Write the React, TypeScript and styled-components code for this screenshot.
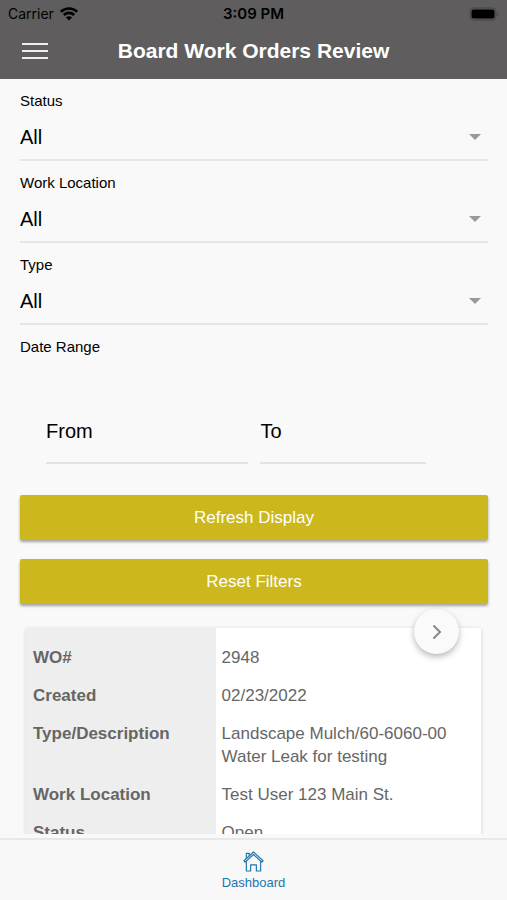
import React from "react";
import styled, { createGlobalStyle } from "styled-components";

const GlobalStyle = createGlobalStyle`
  * { box-sizing: border-box; }
  body {
    margin: 0;
    background: #f9f9f9;
    font-family: "Liberation Sans", Arial, sans-serif;
    color: #000;
  }
`;

const Screen = styled.div`
  display: flex;
  flex-direction: column;
  height: 100vh;
`;

const Header = styled.header`
  flex: none;
  background: #5f5d5e;
`;

const StatusBar = styled.div`
  display: grid;
  grid-template-columns: 1fr auto 1fr;
  align-items: center;
  height: 28px;
  padding: 0 8px;
  font-family: Inter, sans-serif;
  font-size: 14px;
  line-height: 20px;
`;

const Carrier = styled.span`
  display: flex;
  align-items: center;
  gap: 6px;
`;

const Clock = styled.span`
  font-size: 15px;
  font-weight: 600;
`;

const Battery = styled.svg`
  justify-self: end;
`;

const TitleBar = styled.div`
  display: grid;
  grid-template-columns: 48px 1fr 48px;
  align-items: center;
  height: 51px;
  padding: 0 11px 5px;
`;

const MenuButton = styled.button`
  display: flex;
  justify-content: center;
  padding: 8px 0;
  border: 0;
  background: none;
`;

const Title = styled.h1`
  margin: 0;
  color: #fff;
  font-size: 21px;
  line-height: 24px;
  text-align: center;
`;

const Main = styled.main`
  flex: 1;
  min-height: 0;
  overflow-y: auto;
  scrollbar-width: none;
  padding: 0 19px 0 20px;
`;

const Field = styled.div`
  display: flex;
  flex-direction: column;
  height: 82px;
  padding-top: 12px;
  border-bottom: 2px solid #e6e6e6;
`;

const FieldLabel = styled.label`
  font-size: 15px;
  line-height: 20px;
`;

const SelectBox = styled.div`
  display: flex;
  align-items: center;
  padding: 12px 7px 0 0;
`;

const Select = styled.select`
  flex: 1;
  appearance: none;
  padding: 0;
  border: 0;
  background: none;
  color: #000;
  font: 20px/28px "Liberation Sans", Arial, sans-serif;
`;

const DateGroup = styled.fieldset`
  min-width: 0;
  margin: 0;
  padding: 0;
  border: 0;
`;

const DateLegend = styled.legend`
  padding: 12px 0 0;
  font-size: 15px;
  line-height: 20px;
`;

const DateRow = styled.div`
  display: grid;
  grid-template-columns: 11fr 9fr;
  gap: 12px;
  padding: 43px 62px 0 26px;
`;

const DateField = styled.div`
  display: flex;
  align-items: center;
  min-width: 0;
  height: 64px;
  border-bottom: 2px solid #e3e3e3;
`;

const DateLabel = styled.label`
  font-size: 20px;
  line-height: 28px;
`;

const DateInput = styled.input`
  flex: 1;
  min-width: 0;
  margin-left: 8px;
  border: 0;
  background: none;
  font: 20px/28px "Liberation Sans", Arial, sans-serif;
`;

const Actions = styled.div`
  display: flex;
  flex-direction: column;
  gap: 19px;
  padding-top: 31px;
`;

const ActionButton = styled.button`
  height: 45px;
  border: 0;
  border-radius: 2px;
  background: #ccb81d;
  box-shadow: 0 2px 3px rgba(0, 0, 0, 0.35);
  color: #fff;
  font: 17px/24px "Liberation Sans", Arial, sans-serif;
`;

const Card = styled.section`
  position: relative;
  margin: 24px 7px 20px 6px;
  background: #fff;
  border-radius: 2px;
  box-shadow: 0 1px 4px rgba(0, 0, 0, 0.16);
`;

const OpenButton = styled.button`
  position: absolute;
  top: -19px;
  right: 22px;
  display: flex;
  align-items: center;
  justify-content: center;
  width: 45px;
  height: 45px;
  padding: 0;
  border: 0;
  border-radius: 50%;
  background: #fafafa;
  box-shadow: 0 3px 6px rgba(0, 0, 0, 0.28);
`;

const OrderTable = styled.table`
  width: 100%;
  border-collapse: collapse;
  table-layout: fixed;
  color: #666;
  font-size: 17px;
  line-height: 23px;
  text-align: left;

  tr:first-child > * {
    padding-top: 18px;
  }
`;

const NameCell = styled.th`
  width: calc(100% * 5 / 12);
  padding: 7px 7px 8px;
  background: #eee;
  vertical-align: top;
`;

const ValueCell = styled.td`
  padding: 7px 6px 8px;
  vertical-align: top;
  white-space: pre-line;
`;

const TabBar = styled.nav`
  flex: none;
  display: flex;
  justify-content: center;
  margin-top: 4px;
  border-top: 2px solid #e8e8e8;
  background: #f8f8f8;
`;

const Tab = styled.a`
  display: flex;
  flex-direction: column;
  align-items: center;
  gap: 2px;
  padding: 11px 16px 8px;
  color: #1b75ac;
  font-size: 13px;
  line-height: 18px;
  text-decoration: none;
`;

const filters = [
  { id: "status", label: "Status" },
  { id: "location", label: "Work Location" },
  { id: "type", label: "Type" },
];

const order = [
  ["WO#", "2948"],
  ["Created", "02/23/2022"],
  ["Type/Description", "Landscape Mulch/60-6060-00\nWater Leak for testing"],
  ["Work Location", "Test User 123 Main St."],
  ["Status", "Open"],
];

const WifiIcon = () => (
  <svg width="18" height="14" viewBox="0 0 18 14" aria-hidden="true">
    <g fill="none" stroke="#000" strokeWidth="2.6">
      <path d="M.8 4.8C5.4.4 12.6.4 17.2 4.800" />
      <path d="M3.800 8C6.800 5.200 11.200 5.200 14.200 8" />
    </g>
    <path d="M9 13.500 6 10.400C7.700 8.900 10.300 8.900 12 10.400Z" fill="#000" />
  </svg>
);

const BatteryIcon = () => (
  <Battery width="30" height="14" viewBox="0 0 30 14" aria-hidden="true">
    <rect x="1" y="1" width="26" height="12" rx="3.5" fill="none" stroke="#444243" />
    <rect x="2.5" y="2.5" width="23" height="9" rx="2" fill="#000" />
    <path d="M28.5 5v4c1.3-.6 1.3-3.4 0-4Z" fill="#444243" />
  </Battery>
);

const HomeIcon = () => (
  <svg width="21" height="21" viewBox="0 0 22 22" fill="none" stroke="currentColor" strokeWidth="1.200" strokeLinejoin="round" aria-hidden="true">
    <path d="M11 1 1 10.2l1.3 1.4L11 3.7l8.7 7.9 1.3-1.4Z" />
    <path d="M3.5 10.5V21H8v-6.500h6V21h4.500V10.500" />
    <path d="M3.500 7.900V2.500H6.500V5.100" />
  </svg>
);

export default function App() {
  return (
    <Screen>
      <GlobalStyle />
      <Header>
        <StatusBar>
          <Carrier>
            Carrier
            <WifiIcon />
          </Carrier>
          <Clock>3:09 PM</Clock>
          <BatteryIcon />
        </StatusBar>
        <TitleBar>
          <MenuButton aria-label="Menu">
            <svg width="26" height="16" viewBox="0 0 26 16" stroke="#eee" strokeWidth="2" aria-hidden="true">
              <path d="M0 1h26M0 8h26M0 15h26" />
            </svg>
          </MenuButton>
          <Title>Board Work Orders Review</Title>
        </TitleBar>
      </Header>
      <Main>
        {filters.map((f) => (
          <Field key={f.id}>
            <FieldLabel htmlFor={f.id}>{f.label}</FieldLabel>
            <SelectBox>
              <Select id={f.id}>
                <option>All</option>
              </Select>
              <svg width="12" height="6" viewBox="0 0 12 6" aria-hidden="true">
                <path d="M0 0h12L6 6Z" fill="#999" />
              </svg>
            </SelectBox>
          </Field>
        ))}
        <DateGroup>
          <DateLegend>Date Range</DateLegend>
          <DateRow>
            <DateField>
              <DateLabel htmlFor="from">From</DateLabel>
              <DateInput id="from" type="text" />
            </DateField>
            <DateField>
              <DateLabel htmlFor="to">To</DateLabel>
              <DateInput id="to" type="text" />
            </DateField>
          </DateRow>
        </DateGroup>
        <Actions>
          <ActionButton>Refresh Display</ActionButton>
          <ActionButton>Reset Filters</ActionButton>
        </Actions>
        <Card>
          <OrderTable>
            <tbody>
              {order.map(([name, value]) => (
                <tr key={name}>
                  <NameCell scope="row">{name}</NameCell>
                  <ValueCell>{value}</ValueCell>
                </tr>
              ))}
            </tbody>
          </OrderTable>
          <OpenButton aria-label="Open work order">
            <svg width="10" height="16" viewBox="0 0 10 16" fill="none" stroke="#888" strokeWidth="2" aria-hidden="true">
              <path d="m1.500 1.500 6.500 6.500-6.500 6.500" />
            </svg>
          </OpenButton>
        </Card>
      </Main>
      <TabBar>
        <Tab href="#dashboard">
          <HomeIcon />
          Dashboard
        </Tab>
      </TabBar>
    </Screen>
  );
}
